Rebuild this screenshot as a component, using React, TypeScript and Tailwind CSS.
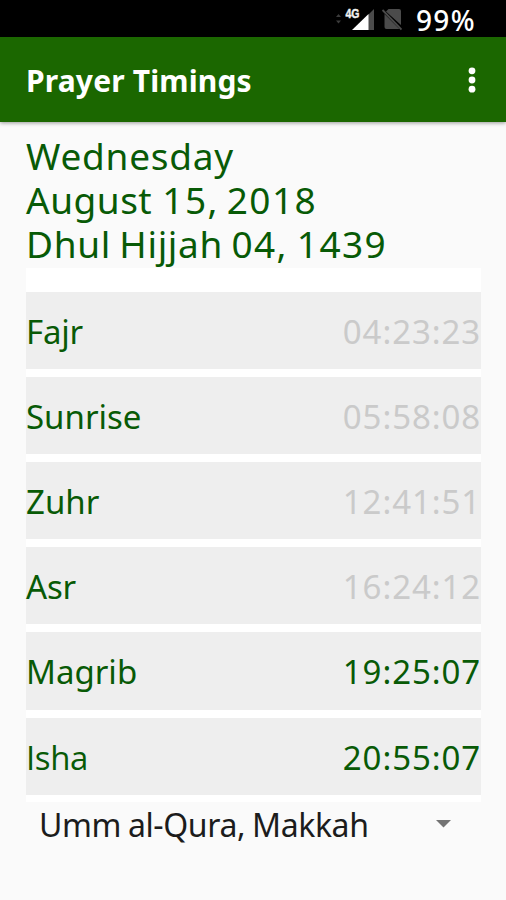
type Prayer = { name: string; time: string; past: boolean; box: string; nameCls: string };

const prayers: Prayer[] = [
  { name: 'Fajr', time: '04:23:23', past: true, box: 'h-[77px] mb-[8px]', nameCls: 'tracking-[-0.2px]' },
  { name: 'Sunrise', time: '05:58:08', past: true, box: 'h-[77px] mb-[8px]', nameCls: '' },
  { name: 'Zuhr', time: '12:41:51', past: true, box: 'h-[77px] mb-[8px]', nameCls: '' },
  { name: 'Asr', time: '16:24:12', past: true, box: 'h-[77px] mb-[8px]', nameCls: 'tracking-[-0.2px]' },
  { name: 'Magrib', time: '19:25:07', past: false, box: 'h-[78px] mb-[8px]', nameCls: '' },
  { name: 'Isha', time: '20:55:07', past: false, box: 'h-[77px] mb-[7px]', nameCls: "font-['Open_Sans',sans-serif] tracking-[-0.4px]" },
];

function StatusBar() {
  return (
    <div className="flex h-[37px] shrink-0 items-start justify-end bg-black pr-[28px] text-white">
      <svg width="68" height="37" viewBox="0 0 68 37" className="mr-[14px] shrink-0">
        <path d="M2 17l2.500-3 2.500 3zM2 20.500l2.500 3 2.500-3z" fill="#3c3c3c" />
        <path d="M40 9v21h-6V15z" fill="#4b4b4b" />
        <path d="M34.500 14v16H18z" fill="#fff" />
        <text x="11.500" y="18" fontSize="12" fontWeight="700" fill="#f2f2f2" stroke="#f2f2f2" strokeWidth="0.400" fontFamily="Liberation Sans, sans-serif" textLength="14" lengthAdjust="spacingAndGlyphs">4G</text>
        <path d="M54.500 9H65q2 0 2 2v14L52 11.500zM50.500 14l15 15H52.500q-2 0-2-2z" fill="#4b4b4b" />
        <path d="M48.500 10l19 19.500" stroke="#4b4b4b" strokeWidth="1.800" />
      </svg>
      <span className="w-[62px] pt-[5px] text-[28px] leading-[30px] font-medium tracking-[1.3px]">99%</span>
    </div>
  );
}

export default function App() {
  return (
    <div className="flex h-[900px] w-[506px] flex-col overflow-hidden bg-[#fafafa] font-['Noto_Sans',sans-serif] whitespace-nowrap">
      <StatusBar />
      <header className="flex h-[85px] shrink-0 items-center justify-between bg-[#1b6700] pr-[30px] pl-[26px] text-white shadow-[0_1px_4px_rgba(0,0,0,0.4)]">
        <h1 className="pt-[2px] text-[30px] leading-[40px] font-bold tracking-[0.15px]">Prayer Timings</h1>
        <svg width="8" height="26" viewBox="0 0 8 26" fill="#fff">
          <circle cx="4" cy="3.800" r="3.400" />
          <circle cx="4" cy="13" r="3.400" />
          <circle cx="4" cy="22.200" r="3.400" />
        </svg>
      </header>
      <main className="flex flex-col pr-[25px] pl-[26px] text-[#085a06]">
        <div className="flex h-[146px] flex-col items-start pt-[12px] text-[37px] leading-[44px] tracking-[0.75px]">
          <span>Wednesday</span>
          <span className="tracking-[0.5px]">
            August <span className="tracking-[1.4px] [word-spacing:-3px]">15, 2018</span>
          </span>
          <span className="tracking-[0.68px] [word-spacing:-2px]">
            Dhul Hijjah <span className="tracking-[1.4px] [word-spacing:-2px]">04, 1439</span>
          </span>
        </div>
        <div className="bg-white pt-[24px]">
          {prayers.map((p) => (
            <div key={p.name} className={`flex items-center justify-between bg-[#eeeeee] pt-[2px] text-[33px] leading-[44px] ${p.box}`}>
              <span className={p.nameCls}>{p.name}</span>
              <span className={p.past ? 'tracking-[0.9px] text-[#cacaca]' : 'tracking-[0.9px]'}>{p.time}</span>
            </div>
          ))}
        </div>
        <div className="flex h-[46px] items-center justify-between pr-[30px] pl-[13px] text-[32px] leading-[44px] tracking-[-0.4px] [word-spacing:-1px] text-[#1c1c1c]">
          <span>Umm al-Qura, Makkah</span>
          <svg width="15" height="10" viewBox="0 0 15 10" fill="#737373">
            <path d="M0 0h15L7.500 7.500z" />
          </svg>
        </div>
      </main>
    </div>
  );
}
